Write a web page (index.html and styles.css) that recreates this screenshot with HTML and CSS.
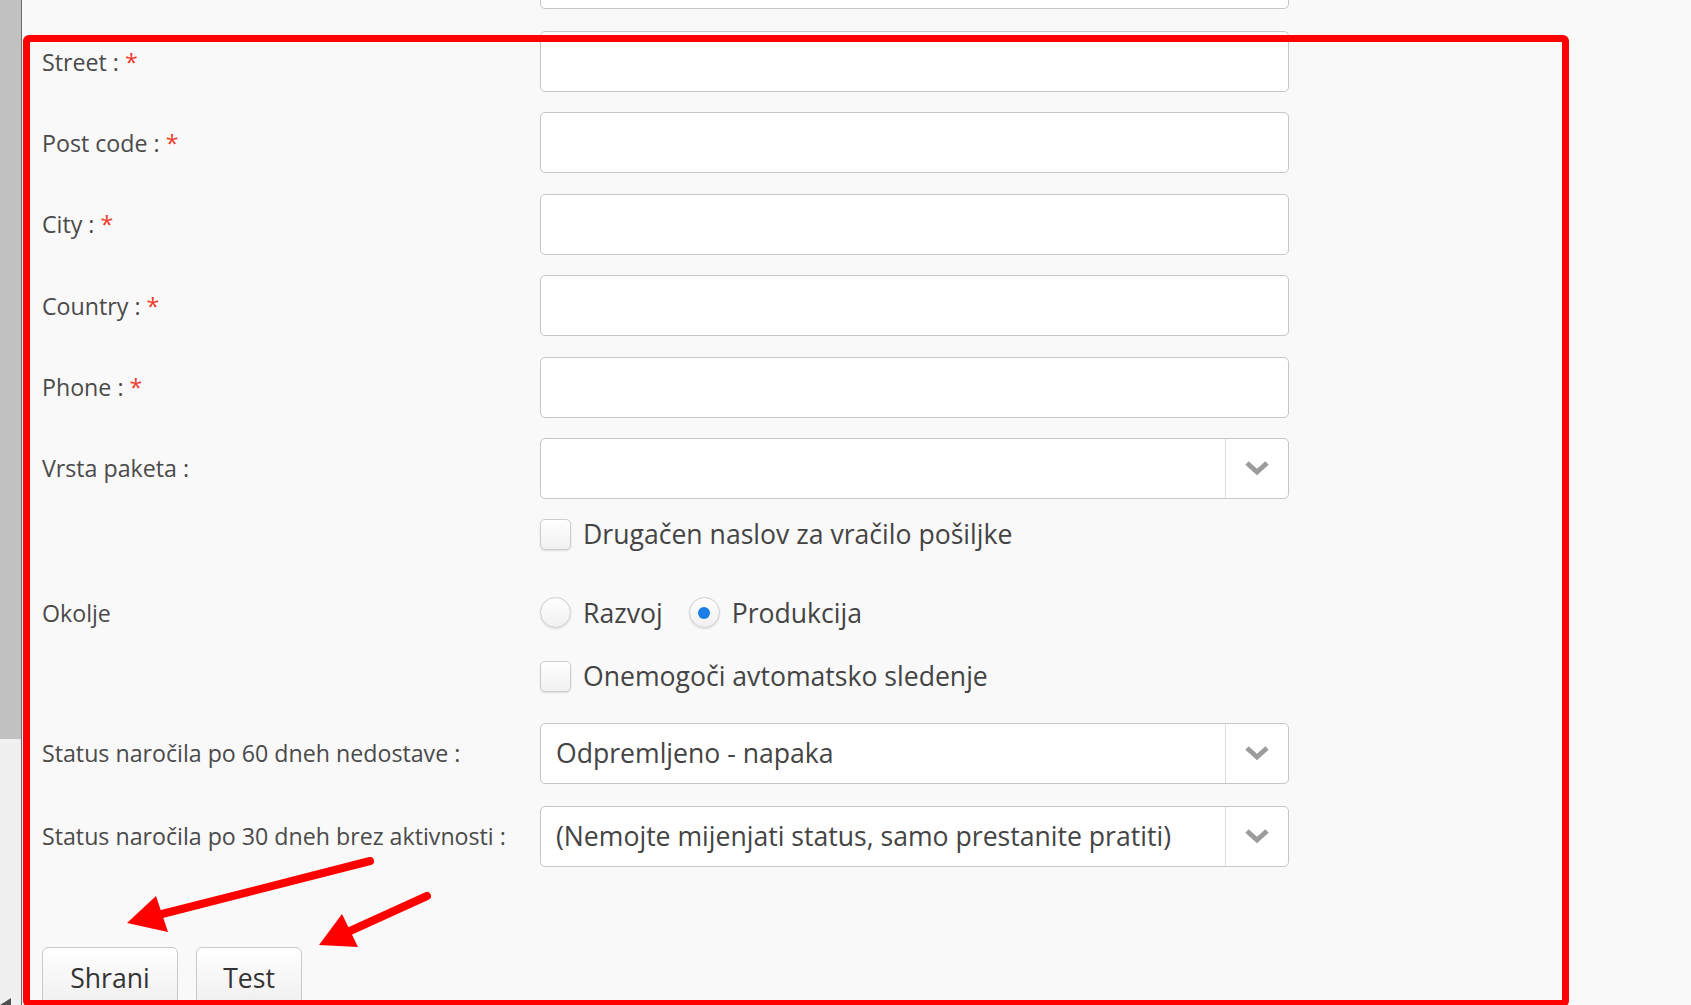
FILE: index.html
```html
<!DOCTYPE html>
<html lang="sl">

<head>
    <meta charset="UTF-8">
    <meta name="viewport" content="width=device-width, initial-scale=1.0">
    <title>Nastavitve dostave</title>

    <link rel="stylesheet" href="styles.css">
</head>

<body>

    <div class="scrollbar">
        <div class="scroll-thumb"></div>
        <div class="scroll-arrow"></div>
    </div>

    <main class="frame">
        <form class="settings">
            <!-- row cut off at the top of the viewport -->
            <div class="row row-first">
                <span class="lbl"></span>
                <input type="text" class="txt">
            </div>

            <div class="row">
                <label class="lbl">Street : <span class="req">*</span></label>
                <input type="text" class="txt">
            </div>
            <div class="row">
                <label class="lbl">Post code : <span class="req">*</span></label>
                <input type="text" class="txt">
            </div>
            <div class="row">
                <label class="lbl">City : <span class="req">*</span></label>
                <input type="text" class="txt">
            </div>
            <div class="row">
                <label class="lbl">Country : <span class="req">*</span></label>
                <input type="text" class="txt">
            </div>
            <div class="row">
                <label class="lbl">Phone : <span class="req">*</span></label>
                <input type="text" class="txt">
            </div>
            <div class="row row-pkg">
                <label class="lbl">Vrsta paketa :</label>
                <div class="dropdown">
                    <span class="dropdown-value"></span>
                    <span class="dropdown-btn">
                        <svg width="24" height="16" viewBox="0 0 24 16"><polyline points="2,3 12,12 22,3" fill="none" stroke="#9c9c9c" stroke-width="5" /></svg>
                    </span>
                </div>
            </div>

            <div class="row row-check">
                <span class="lbl"></span>
                <label class="opt"><span class="checkbox"></span>Drugačen naslov za vračilo pošiljke</label>
            </div>

            <div class="row row-radio">
                <span class="lbl">Okolje</span>
                <div class="opts">
                    <label class="opt"><span class="radio"></span>Razvoj</label>
                    <label class="opt"><span class="radio checked"></span>Produkcija</label>
                </div>
            </div>

            <div class="row row-check2">
                <span class="lbl"></span>
                <label class="opt"><span class="checkbox"></span>Onemogoči avtomatsko sledenje</label>
            </div>

            <div class="row row-status">
                <label class="lbl">Status naročila po 60 dneh nedostave :</label>
                <div class="dropdown">
                    <span class="dropdown-value">Odpremljeno - napaka</span>
                    <span class="dropdown-btn">
                        <svg width="24" height="16" viewBox="0 0 24 16"><polyline points="2,3 12,12 22,3" fill="none" stroke="#9c9c9c" stroke-width="5" /></svg>
                    </span>
                </div>
            </div>
            <div class="row row-last">
                <label class="lbl">Status naročila po 30 dneh brez aktivnosti :</label>
                <div class="dropdown">
                    <span class="dropdown-value">(Nemojte mijenjati status, samo prestanite pratiti)</span>
                    <span class="dropdown-btn">
                        <svg width="24" height="16" viewBox="0 0 24 16"><polyline points="2,3 12,12 22,3" fill="none" stroke="#9c9c9c" stroke-width="5" /></svg>
                    </span>
                </div>
            </div>

            <div class="buttons">
                <button type="button" class="btn btn-save">Shrani</button>
                <button type="button" class="btn btn-test">Test</button>
            </div>
        </form>
    </main>

    <!-- annotation drawn over the screenshot -->
    <div class="mark-box"></div>
    <svg class="mark-arrows" width="1691" height="1005" viewBox="0 0 1691 1005">
        <line x1="370" y1="861" x2="162" y2="914" stroke="#ff0000" stroke-width="8" stroke-linecap="round" />
        <polygon points="127,923 168,932 156,896" fill="#ff0000" />
        <line x1="427" y1="896" x2="350" y2="931" stroke="#ff0000" stroke-width="8" stroke-linecap="round" />
        <polygon points="319,945 358,947 342,914" fill="#ff0000" />
    </svg>

</body>

</html>
```

FILE: styles.css
```css
* {
    margin: 0;
    padding: 0;
    box-sizing: border-box;
}

body {
    background-color: #f9f9f9;
    font-family: "Open Sans", "Liberation Sans", sans-serif;
    color: #4a4a4a;
    display: flex;
    height: 100vh;
    overflow: hidden;
}

.scrollbar {
    width: 21px;
    flex-shrink: 0;
    background-color: #f0f0f0;
    position: relative;
}

.scroll-thumb {
    height: 739px;
    background-color: #c1c1c1;
}

.scroll-arrow {
    position: absolute;
    left: 0;
    bottom: 0;
    width: 0;
    height: 0;
    border-left: 11px solid transparent;
    border-bottom: 7px solid #505050;
}

.frame {
    flex: 1;
    border-left: 1px solid #6a6a6a;
    padding-left: 20px;
}

.settings {
    margin-top: -52px;
}

.row {
    display: grid;
    grid-template-columns: 498px 749px;
    align-items: center;
    margin-bottom: 20.4px;
}

.row-first {
    margin-bottom: 22px;
}

.row-pkg {
    margin-bottom: 20px;
}

.row-check {
    margin-bottom: 47px;
}

.row-radio {
    margin-bottom: 32px;
}

.row-check2 {
    margin-bottom: 31px;
}

.row-status {
    margin-bottom: 22px;
}

.lbl {
    font-size: 23.2px;
    color: #4a4a4a;
}

.req {
    color: #ee3b2e;
}

.txt {
    width: 100%;
    height: 61px;
    border: 1px solid #c6c6c6;
    border-radius: 5px;
    background-color: #fff;
    font-family: inherit;
    font-size: 26.6px;
}

.dropdown {
    display: flex;
    height: 61px;
    border: 1px solid #c6c6c6;
    border-radius: 5px;
    background-color: #fff;
}

.dropdown-value {
    flex: 1;
    display: flex;
    align-items: center;
    padding-left: 15px;
    font-size: 26.6px;
    color: #444;
    white-space: nowrap;
    overflow: hidden;
}

.dropdown-btn {
    width: 63px;
    border-left: 1px solid #dedede;
    display: flex;
    align-items: center;
    justify-content: center;
}

.opts {
    display: flex;
    gap: 26px;
}

.opt {
    display: flex;
    align-items: center;
    gap: 12px;
    font-size: 26.6px;
    color: #444;
    height: 31px;
}

.checkbox,
.radio {
    width: 31px;
    height: 31px;
    border: 1px solid #cdcdcd;
    background: linear-gradient(#ffffff, #f0f0f0);
    box-shadow: 0 1px 2px rgba(0, 0, 0, 0.12);
    flex-shrink: 0;
}

.checkbox {
    border-radius: 5px;
}

.radio {
    border-radius: 50%;
    display: flex;
    align-items: center;
    justify-content: center;
}

.radio.checked::after {
    content: "";
    width: 12px;
    height: 12px;
    border-radius: 50%;
    background-color: #1a7ee6;
}

.buttons {
    display: flex;
    gap: 18px;
    margin-top: 80px;
}

.btn {
    height: 70px;
    padding: 0 0 8px;
    border: 1px solid #c9c9c9;
    border-radius: 6px;
    background: linear-gradient(#ffffff, #ececec);
    font-family: inherit;
    font-size: 26.6px;
    color: #333;
    cursor: pointer;
}

.btn-save {
    width: 136px;
}

.btn-test {
    width: 106px;
}

.mark-box {
    position: absolute;
    left: 23px;
    top: 35px;
    width: 1546px;
    height: 972px;
    border: 7px solid #ff0000;
    border-radius: 6px;
    pointer-events: none;
}

.mark-arrows {
    position: absolute;
    left: 0;
    top: 0;
    pointer-events: none;
}
```
